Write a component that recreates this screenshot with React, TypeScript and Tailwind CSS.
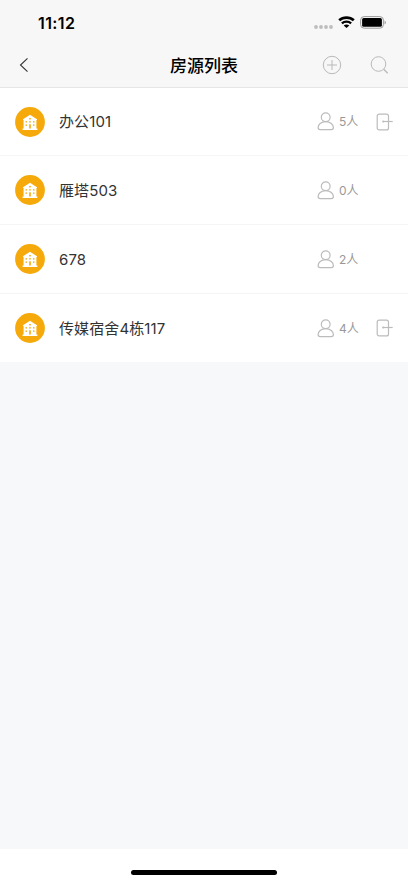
const rooms = [
  { name: "办公101", people: 5, exit: true },
  { name: "雁塔503", people: 0, exit: false },
  { name: "678", people: 2, exit: false },
  { name: "传媒宿舍4栋117", people: 4, exit: true },
];

function StatusBar() {
  return (
    <div className="flex h-[44px] items-center justify-between pl-[38px] pr-[21px]">
      <span className="pt-px text-[16px] leading-[20px] font-semibold tracking-[0.4px] text-black">11:12</span>
      <div className="flex items-center">
        <svg className="mt-[9px] h-[4px] w-[19px]" viewBox="0 0 19 4" fill="#bdbdbf">
          <circle cx="2" cy="2" r="1.9" />
          <circle cx="7" cy="2" r="1.9" />
          <circle cx="12" cy="2" r="1.9" />
          <circle cx="17" cy="2" r="1.9" />
        </svg>
        <svg className="ml-[5px] h-[12px] w-[17px]" viewBox="0 0 17 12" fill="none" stroke="#000">
          <path d="M1.200 4.300C5.200.6 11.800.6 15.800 4.300" strokeWidth="2.700" />
          <path d="M3.900 7.300c2.600-2.300 6.600-2.300 9.200 0" strokeWidth="2.400" />
          <path d="M8.500 12 5.700 9.400c1.600-1.300 4-1.300 5.600 0z" fill="#000" stroke="none" />
        </svg>
        <svg className="ml-[5px] h-[13px] w-[27px]" viewBox="0 0 27 13">
          <rect x=".6" y=".6" width="22.800" height="11.600" rx="3.500" fill="none" stroke="#9a9a9a" />
          <rect x="2.100" y="2.100" width="19.800" height="8.600" rx="1.500" fill="#000" />
          <path d="M24.600 4.400c1.500.6 1.500 3.400 0 4z" fill="#8c8c8c" />
        </svg>
      </div>
    </div>
  );
}

function NavBar() {
  return (
    <div className="grid h-[44px] grid-cols-3 items-center border-b border-[#e6e6e6] pr-[19px] pb-px pl-[19px]">
      <svg className="h-[16px] w-[10px]" viewBox="0 0 10 16" fill="none" stroke="#333" strokeWidth="1.100">
        <path d="M8.500 1.300 1.500 8l7 6.700" />
      </svg>
      <h1 className="pt-[2px] text-center text-[17px] leading-[24px] font-medium text-black">房源列表</h1>
      <div className="flex items-center justify-end gap-[28px]">
        <svg className="h-[20px] w-[20px]" viewBox="0 0 20 20" fill="none" stroke="#b9b9bb">
          <circle cx="10" cy="10" r="8.700" />
          <path d="M5 10h10M10 5v10" />
        </svg>
        <svg className="h-[20px] w-[19px]" viewBox="0 0 19 20" fill="none" stroke="#b9b9bb">
          <circle cx="8.500" cy="9" r="7.300" />
          <path d="m13.700 14.300 4 4" strokeWidth="1.300" />
        </svg>
      </div>
    </div>
  );
}

function HouseIcon() {
  return (
    <svg className="h-[30px] w-[30px]" viewBox="0 0 30 30">
      <circle cx="15" cy="15" r="14.900" fill="#f5a90a" />
      <path d="M15 7.800 22 12.200V13h-.6v8.600h1v1.300H7.600v-1.300h1V13H8v-.8z" fill="#fff" />
      <g fill="#f5a90a">
        <rect x="14.200" y="11" width="1.600" height="1.400" />
        <rect x="10.500" y="14.200" width="1.500" height="1.300" />
        <rect x="14.200" y="14.200" width="1.600" height="1.300" />
        <rect x="18" y="14.200" width="1.500" height="1.300" />
        <rect x="10.500" y="17.500" width="1.500" height="1.300" />
        <rect x="18" y="17.500" width="1.500" height="1.300" />
        <rect x="14.200" y="17.300" width="1.600" height="4.200" />
      </g>
    </svg>
  );
}

function PersonIcon() {
  return (
    <svg className="h-[19px] w-[18px]" viewBox="0 0 18 19" fill="none" stroke="#bcbcbe" strokeWidth="1.200">
      <circle cx="8.700" cy="5.300" r="4.400" />
      <path d="M8.700 9.700C4 9.700 1.100 12.600 1.100 15.600c0 1.300.8 2 2 2h11.300c1.200 0 2-.7 2-2 0-3-3-5.900-7.700-5.900z" />
    </svg>
  );
}

function ExitIcon() {
  return (
    <svg className="h-[18px] w-[17px]" viewBox="0 0 17 18" fill="none" stroke="#bcbcbe" strokeWidth="1.200">
      <rect x="1.200" y="1.200" width="11.300" height="15.700" rx="2" />
      <path d="M7 8.500h9.700" />
      <circle cx="7.200" cy="8.500" r="1.100" fill="#bcbcbe" stroke="none" />
    </svg>
  );
}

export default function App() {
  return (
    <div className="flex h-[883px] w-full flex-col bg-[#f7f8fa] font-[Inter,'Noto_Sans_CJK_SC',sans-serif]">
      <header className="bg-[#f7f7f7]">
        <StatusBar />
        <NavBar />
      </header>
      <main className="flex-1">
        <ul className="bg-white">
          {rooms.map((room) => (
            <li
              key={room.name}
              className="flex h-[69px] items-center border-b border-[#f5f5f6] pr-[14px] pl-[15px] first:h-[68px] last:h-[68px] last:border-b-0"
            >
              <HouseIcon />
              <span className="ml-[14px] flex-1 pt-px text-[15px] leading-[22px] tracking-[0.1px] text-[#333]">
                {room.name}
              </span>
              <PersonIcon />
              <span className="ml-[4px] w-[37px] pt-px text-[12px] leading-[18px] text-[#999]">{room.people}人</span>
              <div className="w-[18px]">{room.exit && <ExitIcon />}</div>
            </li>
          ))}
        </ul>
      </main>
      <footer className="flex h-[34px] items-end justify-center bg-white pb-[8px]">
        <div className="h-[5px] w-[146px] rounded-full bg-black" />
      </footer>
    </div>
  );
}
